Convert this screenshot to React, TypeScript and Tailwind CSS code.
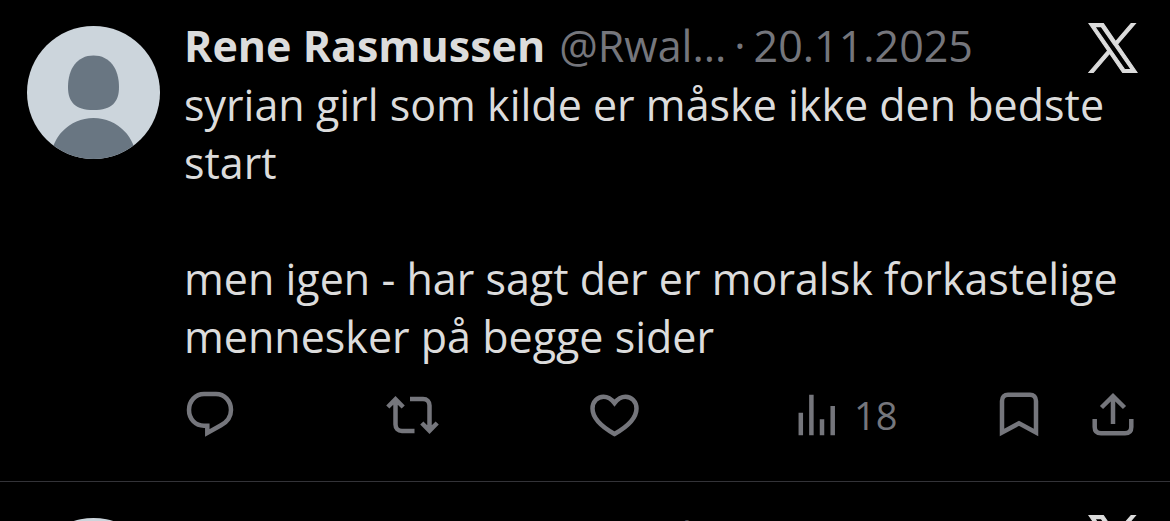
import { ReactNode } from "react";

interface ITweet {
  name: string;
  handle: string;
  date: string;
  text: string;
  views?: number;
}

const tweets: ITweet[] = [
  {
    name: "Rene Rasmussen",
    handle: "@Rwal...",
    date: "20.11.2025",
    text: "syrian girl som kilde er måske ikke den bedste start\n\nmen igen - har sagt der er moralsk forkastelige mennesker på begge sider",
    views: 18,
  },
  {
    name: "Rene Rasmussen",
    handle: "@Rwal...",
    date: "20.11.2025",
    text: "",
  },
];

function Avatar() {
  return (
    <svg
      viewBox="0 0 133 133"
      className="mt-[10px] size-[133px] shrink-0 rounded-full"
      aria-hidden="true"
    >
      <rect width="133" height="133" fill="#ccd5dc" />
      <path
        d="M66.5 29.5C83 29.5 92 43 92 61C92 76 85 84 66.5 84C48 84 41 76 41 61C41 43 50 29.5 66.5 29.5Z"
        fill="#697682"
      />
      <path
        d="M24 133C24 112 42 92 66.5 92C91 92 109 112 109 133Z"
        fill="#697682"
      />
    </svg>
  );
}

function XLogo() {
  return (
    <svg
      viewBox="-12 -12 1224 1251"
      className="mt-1 mr-0.5 ml-auto size-[50px] shrink-0"
      fill="currentColor"
      stroke="currentColor"
      strokeWidth="28"
      aria-hidden="true"
    >
      <path d="M714.163 519.284L1160.89 0H1055.03L667.137 450.887L357.328 0H0L468.492 681.821L0 1226.37H105.866L515.491 750.218L842.672 1226.37H1200L714.137 519.284H714.163ZM569.165 687.828L521.697 619.934L144.011 79.694H306.615L611.412 515.685L658.88 583.579L1055.08 1150.3H892.476L569.165 687.854V687.828Z" />
    </svg>
  );
}

interface IAction {
  label: string;
  path: string;
  children?: ReactNode;
}

function Action({ label, path, children }: IAction) {
  return (
    <button
      type="button"
      aria-label={label}
      className="flex items-center gap-[10px] text-[38px] leading-[48px]"
    >
      <svg
        viewBox="0 0 54 48"
        className="h-12 w-[54px] shrink-0"
        fill="none"
        stroke="currentColor"
        strokeWidth="4.5"
      >
        <path d={path} />
      </svg>
      {children}
    </button>
  );
}

function Actions({ views }: { views?: number }) {
  return (
    <div className="mt-[25px] grid grid-cols-[repeat(4,minmax(0,1fr))_auto] text-[#75767c]">
      <Action
        label="Svar"
        path="M20 3H32C40.5 3 47 10 47 19C47 26 43 31 37 34.3L23.3 42V34.7H20C11.5 34.7 5 28 5 19C5 10 11.5 3 20 3Z"
      />
      <Action
        label="Repost"
        path="M9.5 9V33.5C9.5 37.5 12 40 16 40H28.5M1.8 16L9.5 8.3L17.2 16M24 8H37C41 8 43.5 10.5 43.5 14.5V39M35.8 32L43.5 39.7L51.2 32"
      />
      <Action
        label="Synes godt om"
        path="M26.5 12C23 7.5 19.5 5.7 15.5 5.7C9.5 5.7 4.5 10.5 4.5 17.5C4.5 28 15 36.5 26.5 43C38 36.5 48.5 28 48.5 17.5C48.5 10.5 43.5 5.7 37.5 5.7C33.5 5.7 30 7.5 26.5 12Z"
      />
      <Action
        label="Visninger"
        path="M10.8 44.3V21.7M21.4 44.3V3.7M32 44.3V28.3M42.7 44.3V15"
      >
        {views}
      </Action>
      <div className="flex gap-10">
        <Action
          label="Bogmærke"
          path="M10 41.500V10C10 6 12.5 3.7 16 3.7H38C41.5 3.7 44 6 44 10V41.5L27 32.3Z"
        />
        <Action
          label="Del"
          path="M8.7 28V36C8.7 40 11 42.3 15 42.3H39C43 42.3 45.3 40 45.3 36V28M27 33V6M15.5 16.5L27 5.2L38.5 16.5"
        />
      </div>
    </div>
  );
}

function Tweet({ name, handle, date, text, views }: ITweet) {
  return (
    <article className="flex gap-6 border-b border-[#333338] pt-[26px] pr-[30px] pb-[42px] pl-[27px] text-[43px] leading-[58px]">
      <Avatar />
      <div className="min-w-0 flex-1">
        <header className="flex h-[60px] items-center whitespace-nowrap">
          <h2 className="font-bold">{name}</h2>
          <div className="ml-3.5 flex gap-2 text-[#75767c]">
            <span>{handle}</span>
            <span>·</span>
            <time>{date}</time>
          </div>
          <XLogo />
        </header>
        <p className="whitespace-pre-line">{text}</p>
        <Actions views={views} />
      </div>
    </article>
  );
}

export default function App() {
  return (
    <main className="h-screen overflow-hidden bg-black font-['Open_Sans',sans-serif] text-[#dcdcdc]">
      <div className="-mt-[10px]">
        {tweets.map((tweet, index) => (
          <Tweet key={index} {...tweet} />
        ))}
      </div>
    </main>
  );
}
